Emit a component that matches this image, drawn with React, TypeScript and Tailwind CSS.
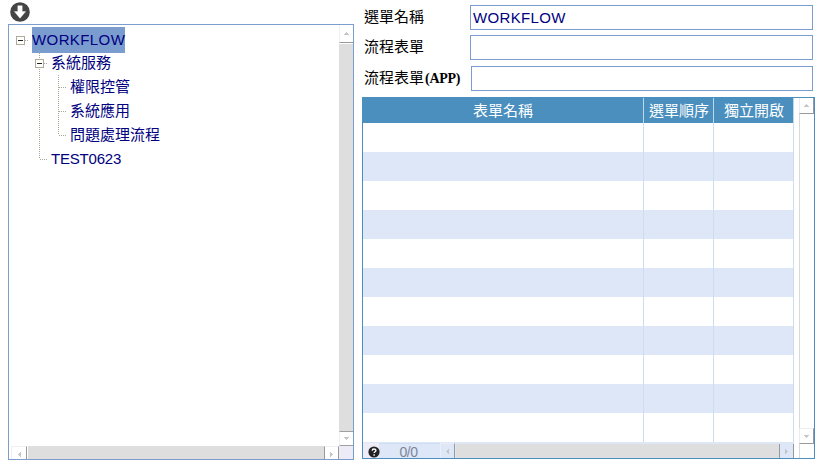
import React from 'react';

type Cell = 'blank' | 'line' | 'tee' | 'end' | 'box' | 'root';

type Node = { label: string; cells: Cell[]; text: string };

const nodes: Node[] = [
  { label: '系統服務', cells: ['blank', 'box'], text: 'ml-[2px]' },
  { label: '權限控管', cells: ['blank', 'line', 'tee'], text: 'ml-[2px]' },
  { label: '系統應用', cells: ['blank', 'line', 'tee'], text: 'ml-[2px]' },
  { label: '問題處理流程', cells: ['blank', 'line', 'end'], text: 'ml-[2px]' },
  { label: 'TEST0623', cells: ['blank', 'end'], text: 'ml-[2px] tracking-[-0.2px]' },
];

const DOT = { stroke: '#aaa795', strokeWidth: 1, strokeDasharray: '1 1' };

function TreeCell({ kind }: { kind: Cell }) {
  const boxed = kind === 'box' || kind === 'root';
  return (
    <svg width="19" height="24" className="shrink-0" shapeRendering="crispEdges">
      {(kind === 'line' || kind === 'tee' || kind === 'box') && <path d="M9.5 0V24" {...DOT} />}
      {kind === 'end' && <path d="M9.5 0V12" {...DOT} />}
      {kind !== 'blank' && kind !== 'line' && <path d="M10 12.5H18" {...DOT} />}
      {boxed && (
        <>
          <rect x="5" y="8" width="9" height="9" fill="#b0aa98" />
          <rect x="6" y="9" width="7" height="7" fill="#fff" />
          <rect x="7" y="12" width="5" height="1" fill="#222" />
        </>
      )}
    </svg>
  );
}

function Arrow({ dir }: { dir: 'up' | 'down' | 'left' | 'right' }) {
  const d = {
    up: 'M0 4H5V3H4V2H3V1H2V2H1V3H0Z',
    down: 'M0 1H5V2H4V3H3V4H2V3H1V2H0Z',
    left: 'M4 0V5H3V4H2V3H1V2H2V1H3V0Z',
    right: 'M1 0V5H2V4H3V3H4V2H3V1H2V0Z',
  }[dir];
  return (
    <svg width="5" height="5" shapeRendering="crispEdges">
      <path d={d} fill="#c6c6c6" />
    </svg>
  );
}

function TreePanel() {
  return (
    <div className="flex h-[436px] w-[346px] flex-col border border-[#7b9ccf] bg-white">
      <div className="flex h-[421px]">
        <div className="flex-1 pt-[2px] pl-[2px] text-[15px] text-[#000080]">
          <div className="flex h-6">
            <div className="pt-px"><TreeCell kind="root" /></div>
            <span className="ml-[2px] h-[26px] w-[93px] bg-[#7b9ccf] text-[15px] leading-[26px] tracking-[0.4px] whitespace-nowrap">WORKFLOW</span>
          </div>
          {nodes.map((n) => (
            <div key={n.label} className="flex h-6">
              {n.cells.map((c, i) => <TreeCell key={i} kind={c} />)}
              <span className={`leading-6 whitespace-nowrap ${n.text}`}>{n.label}</span>
            </div>
          ))}
        </div>
        <div className="flex w-[14px] flex-col">
          <div className="flex h-[18px] items-center justify-center border-b border-l border-b-[#999] border-l-[#f3eff1]"><Arrow dir="up" /></div>
          <div className="mt-px flex-1 bg-[#dedede]" />
          <div className="flex h-[15px] items-center justify-center border-y border-y-[#a0a0a0] border-l border-l-[#f3eff1]"><Arrow dir="down" /></div>
        </div>
      </div>
      <div className="flex h-[13px]">
        <div className="ml-[2px] flex w-4 items-center justify-center border-t border-r border-l border-t-[#f3eff1] border-r-[#999] border-l-[#f3eff1] pt-[3px]"><Arrow dir="left" /></div>
        <div className="ml-px flex-1 bg-[#dedede]" />
        <div className="flex w-[15px] items-center justify-center border-x border-t border-x-[#999] border-t-[#f3eff1] pt-[3px]"><Arrow dir="right" /></div>
        <div className="w-[14px] bg-[#ecebf6]" />
      </div>
    </div>
  );
}

function Field({ label, value, box }: { label: React.ReactNode; value?: string; box: string }) {
  return (
    <div className="flex h-[25px] items-center">
      <label className="pl-[2px] text-[15px] whitespace-nowrap text-black">{label}</label>
      <div className={`ml-auto h-[25px] border border-[#7b9ccf] pl-[2px] text-[15px] leading-[23px] tracking-[0.35px] text-[#000080] ${box}`}>{value}</div>
    </div>
  );
}

function FormTable() {
  const rows = Array.from({ length: 11 }, (_, i) => i);
  return (
    <div className="flex h-[362px] w-[453px] border border-[#4a8fbe] bg-white">
      <div className="flex w-[431px] flex-col">
        <div className="flex h-[25px] bg-[#4a8fbe] text-center text-[15px] leading-[25px] text-white">
          <div className="w-[281px] border-r border-[#b9d9ee]">表單名稱</div>
          <div className="w-[70px] border-r border-[#b9d9ee] pl-px">選單順序</div>
          <div className="w-[80px] border-r border-[#b9d9ee] pl-px">獨立開啟</div>
        </div>
        {rows.map((i) => (
          <div key={i} className="flex h-[29px] odd:bg-[#dde7f8] even:bg-white">
            <div className="w-[281px] border-r border-[#cedcf0]" />
            <div className="w-[70px] border-r border-[#cedcf0]" />
            <div className="w-[80px] border-r border-[#cedcf0]" />
          </div>
        ))}
        <div className="flex h-[16px] border-t border-[#dde7f8] bg-[#dde7f8]">
          <div className="flex w-4 items-center justify-center bg-[#eeedf7] pl-[5px] pt-[3px]">
            <svg width="12" height="12" viewBox="0 0 12 12" className="shrink-0">
              <circle cx="6" cy="6" r="5.6" fill="#222" />
              <path d="M4.2 4.7C4.2 2.5 7.9 2.5 7.9 4.6C7.9 5.8 6.1 5.8 6.1 7.1M6.1 8.3V9.7" fill="none" stroke="#fff" strokeWidth="1.4" />
            </svg>
          </div>
          <div className="w-[61px] border-t border-[#cfddf1] pr-[2px] text-center text-[14px] leading-[16px] tracking-[-0.5px] text-[#7c8598]">0/0</div>
          <div className="flex w-[15px] items-center justify-center border-t border-r border-l border-t-[#eeedf7] border-r-[#999] border-l-[#eeedf7]"><Arrow dir="left" /></div>
          <div className="ml-px mt-px flex-1 bg-[#dedede]" />
          <div className="mt-px flex w-[15px] items-center justify-center border-x border-[#999]"><Arrow dir="right" /></div>
        </div>
      </div>
      <div className="w-[5px]" />
      <div className="flex w-[15px] flex-col">
        <div className="flex h-4 items-center justify-center border-r border-b border-l border-r-[#999] border-b-[#999] border-l-[#eeecef]"><Arrow dir="up" /></div>
        <div className="flex-1 border-l border-[#d9d9d9]" />
        <div className="flex h-4 items-center justify-center border border-t-[#eeecef] border-r-[#999] border-b-[#999] border-l-[#eeecef]"><Arrow dir="down" /></div>
        <div className="h-[14px] border-l border-[#d9d9d9]" />
      </div>
    </div>
  );
}

export default function App() {
  return (
    <div className="flex h-[470px] w-[829px] overflow-hidden bg-white pl-2 font-['Liberation_Sans','Noto_Sans_CJK_TC',sans-serif]">
      <div className="w-[354px]">
        <div className="flex h-6 pt-[2px] pl-[2px]">
          <svg width="20" height="20" viewBox="0 0 20 20">
            <circle cx="10" cy="10" r="9.8" fill="#444" />
            <path d="M7.8 3.8H12.2V9.6H15.6L10 16.2L4.4 9.6H7.8Z" fill="#fff" stroke="#fff" strokeWidth="0.4" strokeLinejoin="round" />
          </svg>
        </div>
        <TreePanel />
      </div>
      <div className="w-[453px] pt-[5px]">
        <div className="w-[451px]">
          <Field label="選單名稱" value="WORKFLOW" box="w-[343px]" />
          <div className="h-[5px]" />
          <Field label="流程表單" box="w-[343px]" />
          <div className="h-[6px]" />
          <Field label={<>流程表單<b className="ml-px font-['Liberation_Serif','Noto_Sans_CJK_TC',serif] text-[14px] tracking-[-0.3px]">(APP)</b></>} box="w-[342px]" />
        </div>
        <div className="h-[6px]" />
        <FormTable />
      </div>
    </div>
  );
}
